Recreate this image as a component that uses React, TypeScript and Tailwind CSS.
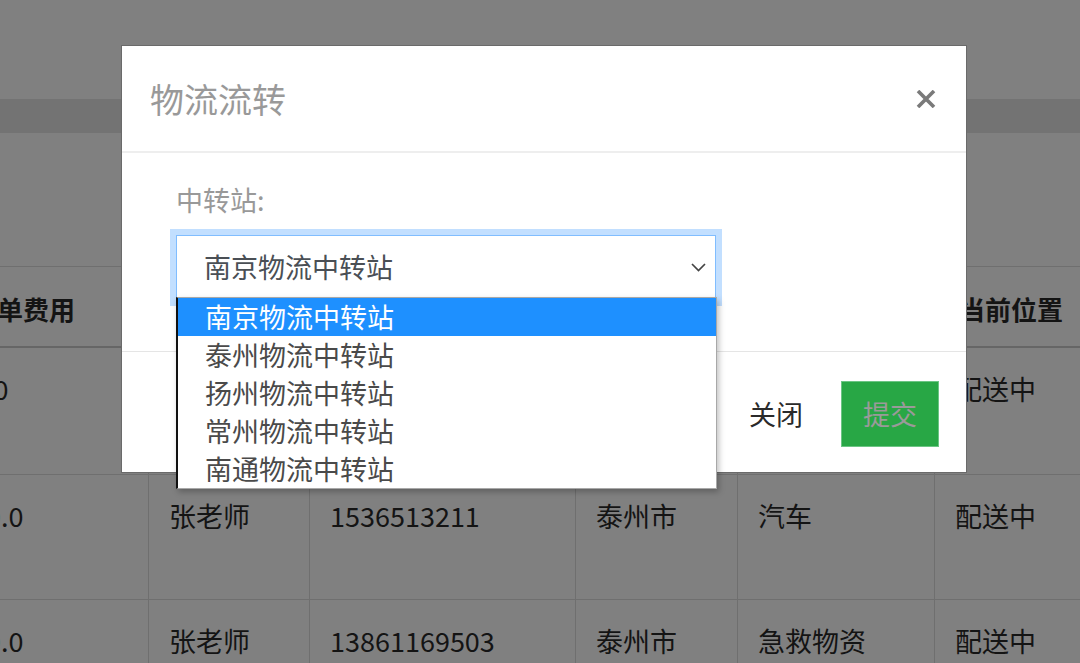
import React from "react";

const font = { fontFamily: '"Noto Sans CJK SC", "Noto Sans", sans-serif' };

const cols = [
  "w-[197px] -ml-[49px]",
  "w-[161px] border-l border-[#6f6f6f]",
  "w-[266px] border-l border-[#6f6f6f]",
  "w-[162px] border-l border-[#6f6f6f]",
  "w-[197px] border-l border-[#6f6f6f]",
  "w-[200px] border-l border-[#6f6f6f]",
];

// cells that sit behind the modal are left empty
const header = ["订单费用", "", "", "", "", "当前位置"];

const rows = [
  { h: "h-[127px]", cells: ["1.0", "", "", "", "", "配送中"] },
  { h: "h-[125px]", cells: ["10.0", "张老师", "1536513211", "泰州市", "汽车", "配送中"] },
  { h: "h-[125px]", cells: ["10.0", "张老师", "13861169503", "泰州市", "急救物资", "配送中"] },
];

const stations = ["南京物流中转站", "泰州物流中转站", "扬州物流中转站", "常州物流中转站", "南通物流中转站"];

function Backdrop() {
  return (
    <div className="flex flex-col">
      <div className="h-[99px]" />
      <div className="h-[34px] bg-[#737373]" />
      <div className="h-[133px]" />
      {/* table */}
      <div className="border-t border-[#6f6f6f] text-[27px] leading-[38px] text-[#141414]">
        <div className="flex h-[81px] border-b-2 border-[#666]">
          {header.map((t, i) => (
            <div key={i} className={`${cols[i]} shrink-0 pl-[20px] pt-[23px] text-[26px] font-bold whitespace-nowrap ${i === 5 ? "pl-[24px]" : ""}`}>
              {t}
            </div>
          ))}
        </div>
        {rows.map((r, ri) => (
          <div key={ri} className={`flex ${r.h} border-b border-[#6f6f6f]`}>
            {r.cells.map((c, i) => (
              <div key={i} className={`${cols[i]} shrink-0 pl-[20px] pt-[22px] whitespace-nowrap`}>
                {c}
              </div>
            ))}
          </div>
        ))}
      </div>
    </div>
  );
}

function TransferModal() {
  return (
    <div className="absolute left-[121px] top-[45px] w-[846px] h-[428px] bg-white border border-[#6a6a6a] flex flex-col">
      {/* header */}
      <div className="h-[107px] shrink-0 flex items-center justify-between pl-[28px] pr-[30px] border-b-2 border-[#eeeeee]">
        <h4 className="text-[34px] text-[#999999] leading-none">物流流转</h4>
        <svg width="20" height="18" viewBox="0 0 20 18" className="mt-[1px]">
          <path d="M2 1 L18 17 M18 1 L2 17" stroke="#7a7a7a" strokeWidth="3.6" strokeLinecap="butt" />
        </svg>
      </div>

      {/* body */}
      <div className="h-[199px] shrink-0 pl-[54px] pt-[28px] border-b border-[#e5e5e5]">
        <label className="block text-[27px] leading-[38px] text-[#999999]">中转站:</label>
        <div className="mt-[10px] w-[552px] p-[6px] -ml-[6px] bg-[#c2dfff]">
          <div className="h-[65px] bg-white border border-[#80bdff] flex items-center justify-between pl-[27px] pr-[9px]">
            <span className="text-[27px] text-[#4a4f55]">南京物流中转站</span>
            <svg width="15" height="9" viewBox="0 0 15 9">
              <path d="M1 1 L7.5 7.5 L14 1" fill="none" stroke="#444" strokeWidth="1.7" />
            </svg>
          </div>
        </div>
      </div>

      {/* footer */}
      <div className="flex-1 flex items-center justify-end gap-[18px] pr-[27px] pt-[4px]">
        <button className="px-[20px] h-[66px] text-[27px] text-[#2a2a2a]">关闭</button>
        <button className="w-[98px] h-[66px] bg-[#28a745] border border-[#6cc584] text-[27px] text-[#9a9a9a]">
          提交
        </button>
      </div>
    </div>
  );
}

function StationList() {
  return (
    <div className="absolute left-[176px] top-[297px] w-[541px] bg-white border border-[#a8a8a8] border-l-2 border-l-[#111] shadow-[2px_3px_6px_rgba(0,0,0,0.25)]">
      {stations.map((s, i) => (
        <div
          key={s}
          className={`h-[38px] pl-[27px] text-[27px] leading-[38px] ${
            i === 0 ? "bg-[#1e90ff] text-white" : "text-[#4a4a4a]"
          }`}
        >
          {s}
        </div>
      ))}
    </div>
  );
}

export default function App() {
  return (
    <div className="relative w-[1080px] h-[663px] overflow-hidden bg-[#808080]" style={font}>
      <Backdrop />
      <TransferModal />
      <StationList />
    </div>
  );
}
